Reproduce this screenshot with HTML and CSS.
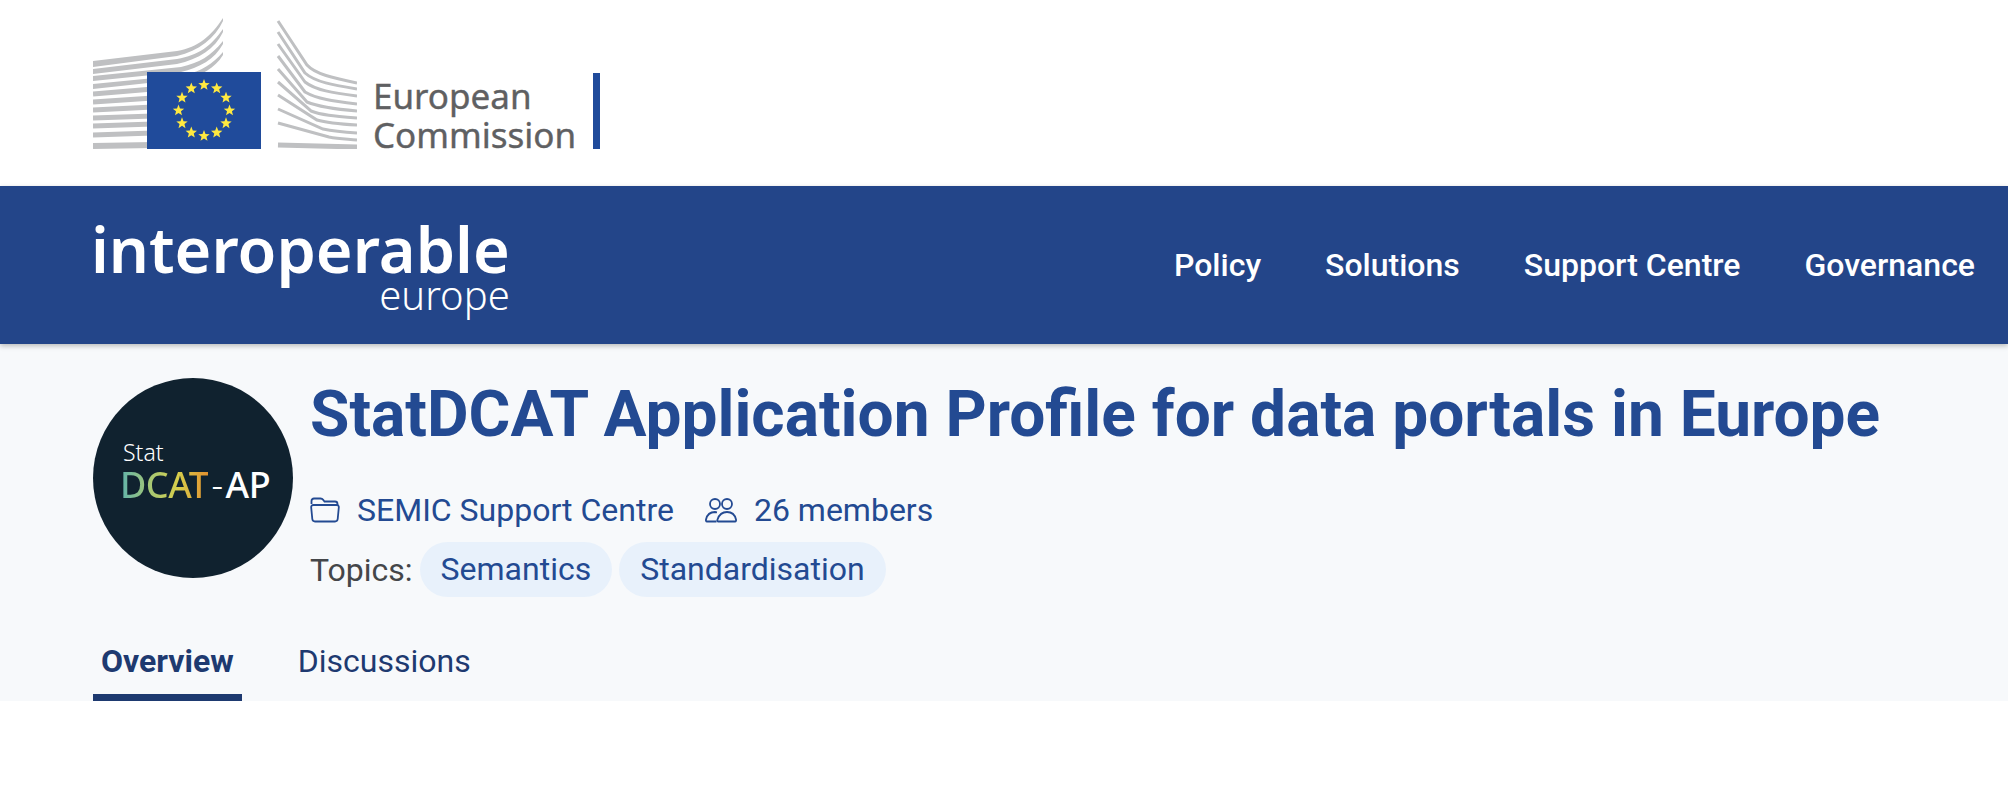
FILE: index.html
```html
<!DOCTYPE html>
<html lang="en">
<head>
    <meta charset="UTF-8">
    <meta name="viewport" content="width=device-width, initial-scale=1.0">
    <title>StatDCAT Application Profile for data portals in Europe</title>
    <link rel="stylesheet" href="styles.css">
</head>
<body>
    <header class="top-header">
        <svg class="ec-emblem" width="264" height="131" viewBox="0 0 264 131">
            <defs>
                <polygon id="star" points="0,-6 1.5,-2.05 5.7,-1.85 2.45,0.8 3.5,4.85 0,2.55 -3.5,4.85 -2.45,0.8 -5.7,-1.85 -1.5,-2.05"/>
            </defs>
            <g class="ec-wedges">
                <path d="M0 43 V49 L84 38 C106 33 122 20 130 3 V0 C118 18 106 29 84 33 Z"/>
                <path d="M0 51 V56 L84 46 C106 41 122 31 130 14 V11 C118 28 106 37 84 41 Z"/>
                <path d="M0 58 V63 L88 54 C106 50 122 41 130 26 V23 C118 38 106 45 88 49 Z"/>
                <path d="M0 66 V71 L92 61 C108 58 122 50 130 37 V34 C120 46 108 53 92 57 Z"/>
            </g>
            <g class="ec-stripes">
                <path stroke-width="5" d="M0 76 L60 71"/>
                <path stroke-width="5" d="M0 84 L60 80"/>
                <path stroke-width="5" d="M0 92 L60 89"/>
                <path stroke-width="5" d="M0 100 L60 98"/>
                <path stroke-width="5" d="M0 108 L60 106"/>
                <path stroke-width="5" d="M0 117 L60 115"/>
                <path stroke-width="6" d="M0 128 L60 127"/>
                <path stroke-width="3" d="M185 3 L214 47 C222 56 240 60 264 65"/>
                <path stroke-width="3" d="M185 14 L212 55 C222 64 240 67 264 71"/>
                <path stroke-width="3" d="M185 26 L212 64 C222 72 240 75 264 78"/>
                <path stroke-width="3" d="M185 38 L212 74 C224 81 240 83 264 86"/>
                <path stroke-width="3" d="M185 51 L214 84 C226 89 240 91 264 93"/>
                <path stroke-width="3" d="M185 64 L218 93 C228 97 240 98 264 100"/>
                <path stroke-width="3" d="M185 77 L224 102 C234 105 246 106 264 107"/>
                <path stroke-width="3" d="M185 91 L230 111 C240 113 250 114 264 115"/>
                <path stroke-width="3" d="M185 105 L236 119 C246 121 254 121 264 122"/>
                <path stroke-width="5" d="M185 127 L264 129"/>
            </g>
            <rect class="ec-flag" x="54" y="54" width="114" height="77"/>
            <g class="ec-stars">
                <use href="#star" x="111" y="67"/>
                <use href="#star" x="123.7" y="70.4"/>
                <use href="#star" x="133" y="79.7"/>
                <use href="#star" x="136.5" y="92.5"/>
                <use href="#star" x="133" y="105.3"/>
                <use href="#star" x="123.7" y="114.6"/>
                <use href="#star" x="111" y="118"/>
                <use href="#star" x="98.3" y="114.6"/>
                <use href="#star" x="89" y="105.3"/>
                <use href="#star" x="85.5" y="92.5"/>
                <use href="#star" x="89" y="79.7"/>
                <use href="#star" x="98.3" y="70.4"/>
            </g>
        </svg>
        <div class="ec-name">European<br>Commission</div>
    </header>

    <nav class="main-nav">
        <a class="brand" href="#">
            <span class="brand-main">interoperable</span>
            <span class="brand-sub">europe</span>
        </a>
        <ul class="nav-links">
            <li><a href="#">Policy</a></li>
            <li><a href="#">Solutions</a></li>
            <li><a href="#">Support Centre</a></li>
            <li><a href="#">Governance</a></li>
        </ul>
    </nav>

    <section class="page-head">
        <div class="head-row">
            <div class="solution-logo">
                <span class="logo-stat">Stat</span>
                <span class="logo-name"><span class="logo-dcat">DCAT</span><span class="logo-dash">-</span>AP</span>
            </div>
            <div class="head-info">
                <h1>StatDCAT Application Profile for data portals in Europe</h1>
                <div class="meta-row">
                    <a class="meta-item" href="#">
                        <svg class="meta-icon" width="30" height="26" viewBox="0 0 30 26">
                            <path d="M1.5 7 V4 C1.5 2.5 2.5 1.5 4 1.5 H10.5 C12 1.5 12.5 2 13.5 3.2 L14.5 4.5 H25 C26.5 4.5 27.5 5.5 27.5 7 V8"/>
                            <path d="M3.5 8 H26.5 C28 8 29 9 28.8 10.5 L27.7 22 C27.5 23.5 26.5 24.5 25 24.5 H5 C3.5 24.5 2.5 23.5 2.3 22 L1.2 10.5 C1 9 2 8 3.5 8 Z"/>
                        </svg>
                        SEMIC Support Centre
                    </a>
                    <span class="meta-item">
                        <svg class="meta-icon" width="32" height="26" viewBox="0 0 32 26">
                            <circle cx="10" cy="7" r="5"/>
                            <circle cx="22" cy="7" r="5"/>
                            <path d="M11.5 24.5 H2 C1 24.5 .8 23.5 1 22.5 C2 18 5 15 10 15 L12 15.3"/>
                            <path d="M13 24.5 H30 C31 24.5 31.2 23.5 31 22.5 C30 18 27 15 22 15 C17 15 14 18 12.5 22.5 C12.2 23.5 12.2 24.5 13 24.5 Z"/>
                        </svg>
                        26 members
                    </span>
                </div>
                <div class="topics-row">
                    <span class="topics-label">Topics:</span>
                    <a class="topic-pill" href="#">Semantics</a>
                    <a class="topic-pill" href="#">Standardisation</a>
                </div>
            </div>
        </div>
        <div class="tabs">
            <a class="tab active" href="#">Overview</a>
            <a class="tab" href="#">Discussions</a>
        </div>
    </section>
</body>
</html>
```

FILE: styles.css
```css
body, html {
    margin: 0;
    padding: 0;
    background-color: #fff;
    font-family: Roboto, Arial, sans-serif;
}
a {
    color: inherit;
    text-decoration: none;
}
.top-header {
    height: 186px;
    box-sizing: border-box;
    padding: 18px 0 0 93px;
    display: flex;
    align-items: flex-start;
}
.ec-wedges path {
    fill: #bfc0c2;
}
.ec-stripes path {
    fill: none;
    stroke: #bfc0c2;
}
.ec-flag {
    fill: #204b9b;
}
.ec-stars {
    fill: #ffe940;
}
.ec-name {
    margin: 55px 0 0 16px;
    padding: 3px 17px 0 0;
    border-right: 7px solid #204b9b;
    height: 76px;
    box-sizing: border-box;
    font-family: "Noto Sans", sans-serif;
    font-size: 35px;
    line-height: 39px;
    color: #5f6062;
    -webkit-text-stroke: 0.4px #5f6062;
}
.main-nav {
    height: 158px;
    box-sizing: border-box;
    padding: 0 33px 0 91px;
    display: flex;
    justify-content: space-between;
    align-items: center;
    background-color: #234589;
    box-shadow: 0 2px 5px rgba(0, 0, 0, 0.25);
    position: relative;
    color: #fff;
}
.brand {
    display: flex;
    flex-direction: column;
    align-items: flex-end;
    font-family: "Noto Sans", sans-serif;
    margin-top: -7px;
}
.brand-main {
    font-size: 63px;
    font-weight: 600;
    line-height: 66px;
}
.brand-sub {
    font-size: 40px;
    font-weight: 300;
    line-height: 26px;
}
.nav-links {
    list-style: none;
    display: flex;
    gap: 64px;
    margin: 0;
    padding: 0;
    font-size: 32px;
    font-weight: 500;
}
.page-head {
    height: 357px;
    box-sizing: border-box;
    padding: 34px 0 0 93px;
    background-color: #f7f9fb;
    display: flex;
    flex-direction: column;
    justify-content: space-between;
}
.head-row {
    display: flex;
    gap: 17px;
}
.solution-logo {
    width: 200px;
    height: 200px;
    border-radius: 50%;
    background-color: #10222f;
    color: #fff;
    font-family: "Noto Sans", sans-serif;
    display: flex;
    flex-direction: column;
    justify-content: center;
    padding: 0 0 14px 28px;
    box-sizing: border-box;
}
.logo-stat {
    font-size: 23px;
    font-weight: 300;
    line-height: 28px;
    padding-left: 2px;
}
.logo-name {
    font-size: 36px;
    font-weight: 500;
    line-height: 38px;
    letter-spacing: -0.5px;
    margin-left: -1px;
}
.logo-dcat {
    background: linear-gradient(90deg, #5fb3ad 0%, #a8c873 35%, #d6cf4c 65%, #e3912f 100%);
    -webkit-background-clip: text;
    background-clip: text;
    color: transparent;
}
.logo-dash {
    font-weight: 300;
    margin: 0 3px;
}
.head-info {
    padding-top: 2px;
}
.head-info h1 {
    margin: 0;
    font-size: 64px;
    line-height: 70px;
    font-weight: 700;
    color: #234a92;
}
.meta-row {
    display: flex;
    gap: 31px;
    margin-top: 40px;
    font-size: 32px;
    line-height: 40px;
    color: #234a92;
}
.meta-item {
    display: flex;
    align-items: center;
    gap: 17px;
}
.meta-icon {
    fill: none;
    stroke: #234a92;
    stroke-width: 1.8;
}
.topics-row {
    display: flex;
    align-items: center;
    gap: 7px;
    margin-top: 12px;
    font-size: 32px;
}
.topics-label {
    color: #444649;
}
.topic-pill {
    height: 55px;
    line-height: 55px;
    padding: 0 21px;
    border-radius: 28px;
    background-color: #e8f1fb;
    color: #234a92;
}
.tabs {
    display: flex;
    gap: 48px;
    font-size: 32px;
    color: #1e3a70;
}
.tab {
    padding: 0 8px 13px;
    line-height: 40px;
    border-bottom: 7px solid transparent;
}
.tab.active {
    font-weight: 700;
    border-bottom-color: #1e3a70;
}
```
